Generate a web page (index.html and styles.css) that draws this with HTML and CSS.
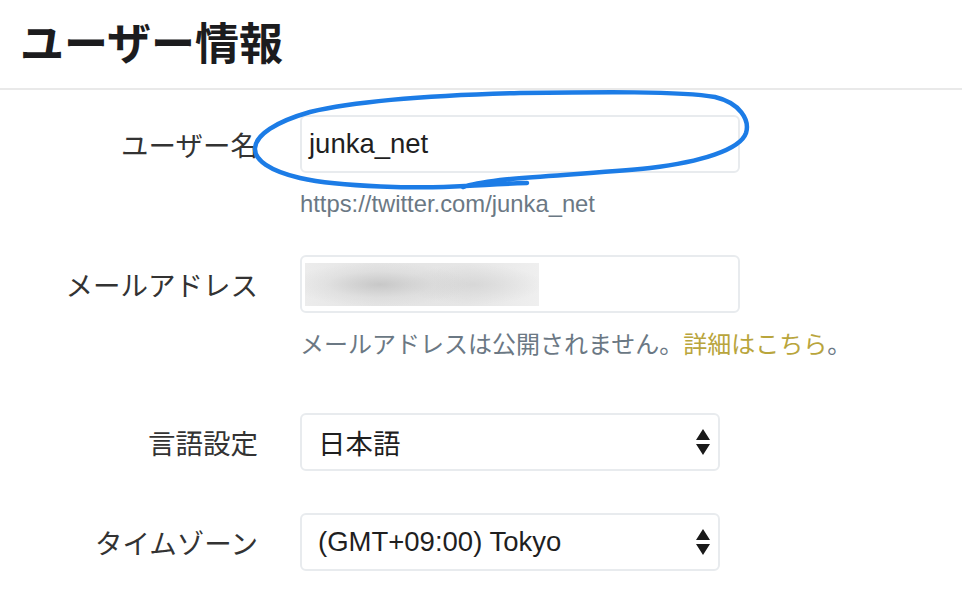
FILE: index.html
```html
<!DOCTYPE html>
<html lang="ja">
<head>
<meta charset="utf-8">
<title>ユーザー情報</title>
<link rel="stylesheet" href="styles.css">
</head>
<body>
<div class="page">
  <header class="header">
    <h1 class="title">ユーザー情報</h1>
  </header>
  <main class="form">
    <div class="row row-user">
      <div class="label">ユーザー名</div>
      <div class="field">
        <div class="input">junka_net</div>
        <div class="help help-url">https://twitter.com/junka_net</div>
      </div>
    </div>
    <div class="row row-mail">
      <div class="label">メールアドレス</div>
      <div class="field">
        <div class="input input-mail"><div class="blurred"></div></div>
        <div class="help help-ja">メールアドレスは公開されません。<span class="link">詳細はこちら</span>。</div>
      </div>
    </div>
    <div class="row row-lang">
      <div class="label">言語設定</div>
      <div class="field">
        <div class="select">
          <span class="select-text">日本語</span>
          <svg class="arrows" width="14" height="26" viewBox="0 0 14 26"><path d="M7 0 L14 11 L0 11 Z M0 15 L14 15 L7 26 Z" fill="#1a1a1a"/></svg>
        </div>
      </div>
    </div>
    <div class="row row-tz">
      <div class="label">タイムゾーン</div>
      <div class="field">
        <div class="select">
          <span class="select-text latin">(GMT+09:00) Tokyo</span>
          <svg class="arrows" width="14" height="26" viewBox="0 0 14 26"><path d="M7 0 L14 11 L0 11 Z M0 15 L14 15 L7 26 Z" fill="#1a1a1a"/></svg>
        </div>
      </div>
    </div>
  </main>
  <svg class="annotation" width="962" height="614" viewBox="0 0 962 614">
    <path d="M 527 183 C 500 184, 480 185, 465 186 C 420 189, 340 187, 300 178 C 270 171, 254 160, 255 148 C 256 135, 275 122, 310 112 C 360 100, 440 95, 520 93 C 600 92, 680 91, 715 97 C 740 103, 750 120, 746 133 C 740 150, 700 162, 650 168 C 600 173, 540 176, 500 180 C 485 182, 472 184, 463 187" fill="none" stroke="#1c7ce6" stroke-width="4.5" stroke-linecap="round" stroke-linejoin="round"/>
  </svg>
</div>
</body>
</html>
```
FILE: styles.css
```css
html, body {
  margin: 0;
  padding: 0;
  background: #ffffff;
}

body {
  font-family: "Liberation Sans", "Noto Sans CJK JP", sans-serif;
  color: #222222;
}

.page {
  position: relative;
  width: 962px;
  height: 614px;
  overflow: hidden;
}

.header {
  height: 88px;
  border-bottom: 2px solid #e9e9e9;
  box-sizing: content-box;
}

.title {
  margin: 0;
  padding: 19px 0 0 20px;
  font-family: "Noto Sans CJK JP", sans-serif;
  font-weight: 700;
  font-size: 44px;
  line-height: 44px;
  color: #1c1c1e;
}

.form {
  padding-top: 25px;
}

.row {
  display: flex;
  align-items: flex-start;
}

.row-mail {
  margin-top: 36px;
}

.row-lang {
  margin-top: 55px;
}

.row-tz {
  margin-top: 42px;
}

.label {
  flex: 0 0 258px;
  margin-right: 42px;
  text-align: right;
  height: 58px;
  line-height: 58px;
  font-family: "Noto Sans CJK JP", sans-serif;
  font-size: 27.5px;
  color: #333333;
  white-space: nowrap;
}

.field {
  display: flex;
  flex-direction: column;
}

.input {
  width: 440px;
  height: 58px;
  box-sizing: border-box;
  border: 2px solid #e8ebee;
  border-radius: 6px;
  padding: 0 7px;
  font-size: 27.5px;
  line-height: 54px;
  color: #1f1f1f;
}

.input-mail {
  padding: 6px 0 0 3px;
}

.blurred {
  width: 234px;
  height: 43px;
  background:
    radial-gradient(ellipse 90px 22px at 32% 50%, rgba(190,190,190,0.75), rgba(210,210,210,0.35) 60%, rgba(220,220,220,0) 100%),
    radial-gradient(ellipse 70px 20px at 72% 50%, rgba(205,205,205,0.6), rgba(220,220,220,0) 100%),
    linear-gradient(90deg, #ececec, #e4e4e4 30%, #e6e6e6 70%, #efefef);
}

.help {
  font-size: 23.8px;
  line-height: 30px;
  color: #6b7884;
  white-space: nowrap;
}

.help-url {
  margin-top: 16px;
}

.help-ja {
  margin-top: 15px;
  font-family: "Noto Sans CJK JP", sans-serif;
  font-size: 24px;
}

.link {
  color: #b9a53c;
}

.select {
  width: 420px;
  height: 58px;
  box-sizing: border-box;
  border: 2px solid #e8ebee;
  border-radius: 6px;
  padding: 0 8px 0 16px;
  display: flex;
  align-items: center;
  justify-content: space-between;
}

.select-text {
  font-family: "Noto Sans CJK JP", sans-serif;
  font-size: 27.5px;
  line-height: 54px;
  color: #1f1f1f;
}

.select-text.latin {
  font-family: "Liberation Sans", sans-serif;
  font-size: 27.5px;
}

.arrows {
  display: block;
}

.annotation {
  position: absolute;
  top: 0;
  left: 0;
  pointer-events: none;
}
```
